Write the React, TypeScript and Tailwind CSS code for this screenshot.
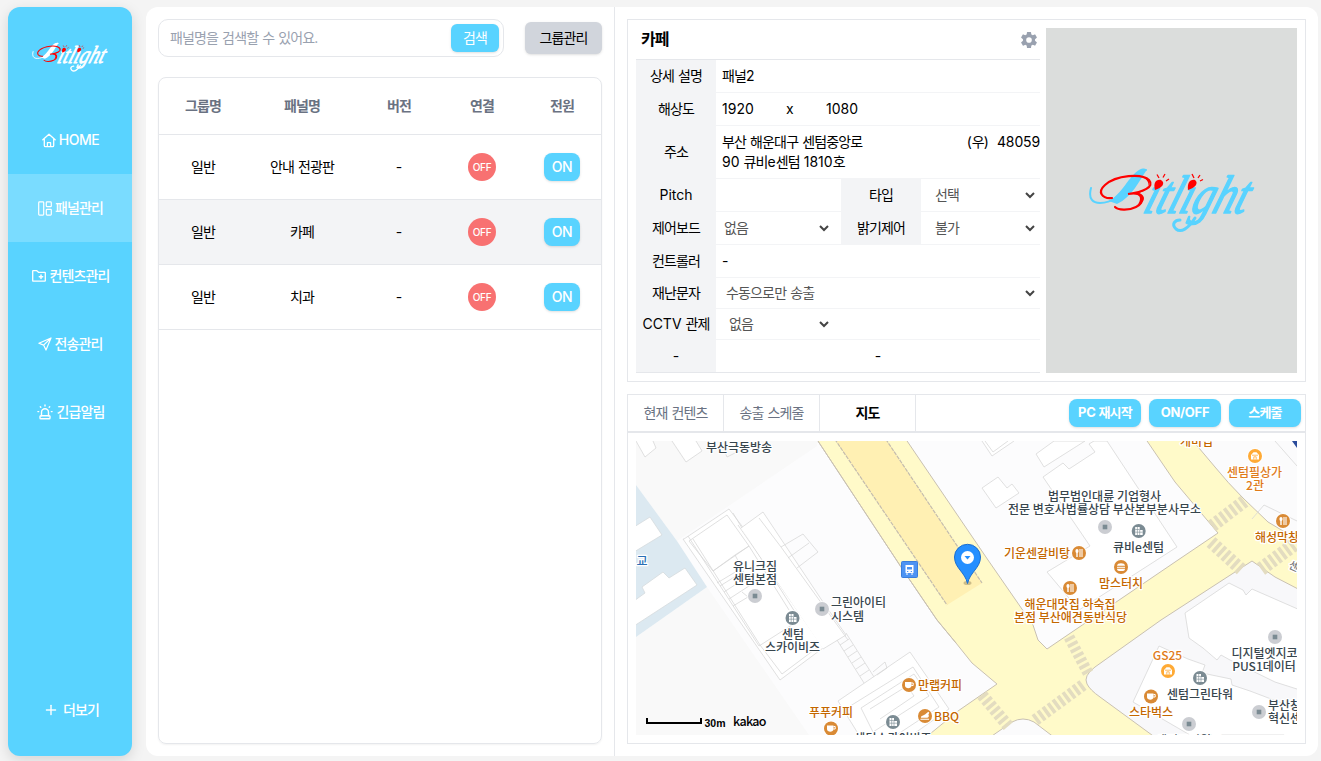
import React from "react";
import { AiOutlinePlus } from "react-icons/ai";
import { IoSettingsSharp } from "react-icons/io5";

/* Tightens Hangul runs while leaving Latin letters and digits untouched. */
function T({ children }: { children: string }) {
  const parts = children.split(/([\uac00-\ud7a3]+)/);
  return (
    <>
      {parts.map((p, i) =>
        i % 2 ? (
          <span key={i} className="tracking-[-0.06em]">
            {p}
          </span>
        ) : (
          p
        ),
      )}
    </>
  );
}

function Logo({ className, main }: { className: string; main: string }) {
  return (
    <svg viewBox="0 0 166 68" className={className} fill="none">
      <path d="M2 21C-1 32 4 36 11 36C24 36 34 27 42 15C47 7 52 2 57 3" stroke={main} strokeWidth="2" strokeLinecap="round" />
      <path d="M20 34C33 27 40 9 50 3C54 1 58 1 57 4C50 14 43 30 28 37Z" fill={main} />
      <path
        d="M23 31C13 32 8 25 16 18C27 8 53 6 60 13C66 20 54 25 39 27C57 24 56 36 47 40C39 44 29 43 26 40"
        stroke="#ff0000"
        strokeWidth="2.200"
        strokeLinecap="round"
      />
      <path d="M54 10C65 12 61 22 50 25L44 27C52 27 53 32 48 39C58 34 56 28 50 26C59 23 64 17 54 10Z" fill="#ff0000" />
      <g transform="translate(53 46) skewX(-19)">
        <text
          x="0"
          y="0"
          textLength="102"
          lengthAdjust="spacingAndGlyphs"
          fontSize="54"
          fontStyle="italic"
          fontFamily="Liberation Serif, serif"
          fill={main}
          stroke={main}
          strokeWidth="1.700"
          strokeLinejoin="round"
        >
          ıtlıght
        </text>
      </g>
      <path d="M106 51C99 62 92 66 87 62C82 57 86 53 91 53" stroke={main} strokeWidth="3" strokeLinecap="round" />
      <g fill="#ff0000">
        <path d="M66 23C64 16 67 12 72 13C77 16 73 21 66 23Z" />
        <path d="M99 23C98 16 101 12 106 13C110 16 106 21 99 23Z" />
      </g>
      <path
        d="M70 11L68 7.500M74 10.500L76 7M77 14L80 12M105 11L103 7M109 11L111 8M111 14L114 12.500"
        stroke="#ff0000"
        strokeWidth="1.300"
      />
    </svg>
  );
}

const iconProps = {
  fill: "none",
  stroke: "currentColor",
  strokeWidth: 1.3,
  strokeLinejoin: "round" as const,
  strokeLinecap: "round" as const,
};

const HomeIcon = () => (
  <svg width="14" height="15" viewBox="0 0 14 15" {...iconProps}>
    <path d="M0.800 6.800L7 1.200L13.200 6.800M2.300 6V12.500Q2.300 13.700 3.500 13.700H10.500Q11.700 13.700 11.700 12.500V6" />
    <path d="M5.400 13.500V9.700H8.600V13.500" strokeWidth="1.200" />
  </svg>
);

const PanelIcon = () => (
  <svg width="14" height="15" viewBox="0 0 14 15" {...iconProps} strokeWidth="1.200">
    <rect x="0.700" y="0.900" width="5" height="13.200" rx="0.800" />
    <rect x="8.300" y="0.900" width="5" height="4.800" rx="0.800" />
    <rect x="8.300" y="8.300" width="5" height="5.800" rx="0.800" />
  </svg>
);

const FolderIcon = () => (
  <svg width="14" height="12" viewBox="0 0 14 12" {...iconProps}>
    <path d="M0.700 10.700V1.200Q0.700 0.700 1.200 0.700H4.800L6.500 2.300H12.800Q13.300 2.300 13.300 2.800V10.700Q13.300 11.200 12.800 11.200H1.200Q0.700 11.200 0.700 10.700Z" />
    <path d="M7.300 6.700H10.700M9 5V8.400" strokeWidth="1.500" />
  </svg>
);

const PlaneIcon = () => (
  <svg width="14" height="14" viewBox="0 0 14 14" {...iconProps} strokeWidth="1.200">
    <path d="M13 1L0.900 6.200L5.600 8.100L8 13L13 1ZM13 1L5.600 8.100" />
  </svg>
);

const SirenIcon = () => (
  <svg width="16" height="16" viewBox="0 0 16 16" {...iconProps} strokeWidth="1.400">
    <path d="M4.500 11.700V8.300A3.500 3.500 0 0 1 11.500 8.300V11.700" />
    <rect x="3" y="11.700" width="10" height="3" rx="0.800" />
    <path d="M8 1V2M3.300 2.800L3.800 3.300M12.700 2.800L12.200 3.300M0.900 7.600H1.700M14.300 7.600H15.100" />
  </svg>
);

const nav = [
  { label: "HOME", icon: <HomeIcon />, gap: "gap-[3px] pl-px" },
  { label: "패널관리", icon: <PanelIcon />, gap: "gap-[3px] pl-px", active: true },
  { label: "컨텐츠관리", icon: <FolderIcon />, gap: "gap-[3px] pl-[2px]" },
  { label: "전송관리", icon: <PlaneIcon />, gap: "gap-[2px] pl-px" },
  { label: "긴급알림", icon: <SirenIcon />, gap: "gap-[3px] pl-[2px]" },
];

function Sidebar() {
  return (
    <aside className="flex h-[749px] w-[124px] shrink-0 flex-col rounded-[12px] bg-[#59d3ff] text-white shadow-[0_4px_14px_rgba(0,0,0,0.13)]">
      <div className="flex h-[99px] justify-center pt-[35px]">
        <Logo className="h-[31px] w-[76px]" main="#ffffff" />
      </div>
      {nav.map((n) => (
        <div
          key={n.label}
          className={"flex h-[68px] items-center justify-center font-medium " + n.gap + (n.active ? " bg-[#7adcff]" : "")}
        >
          {n.icon}
          <span className={n.label === "HOME" ? "tracking-[-0.03em]" : ""}>
            <T>{n.label}</T>
          </span>
        </div>
      ))}
      <div className="mt-auto mb-[36px] flex h-5 items-center justify-center gap-[5px] pl-[3px] font-medium">
        <AiOutlinePlus size={14} strokeWidth={30} />
        <span>
          <T>더보기</T>
        </span>
      </div>
    </aside>
  );
}

const cols = "grid grid-cols-[88px_110px_84px_82px_78px] items-center text-center";

function PanelList() {
  return (
    <section className="flex w-[469px] shrink-0 flex-col border-r border-gray-200 pt-3 pr-3 pb-3 pl-3">
      <div className="flex items-center">
        <div className="flex h-[38px] w-[346px] items-center justify-between rounded-[10px] border border-gray-200 pr-1 pl-[11px]">
          <span className="text-gray-400">
            <T>패널명을 검색할 수 있어요.</T>
          </span>
          <button className="h-7 w-12 rounded-md bg-[#59d3ff] text-white shadow-sm">
            <T>검색</T>
          </button>
        </div>
        <button className="ml-[21px] h-8 w-[77px] rounded-md bg-gray-300 shadow">
          <T>그룹관리</T>
        </button>
      </div>
      <div className="mt-5 h-[667px] w-[444px] overflow-hidden rounded-[8px] border border-gray-200 shadow-xs">
        <div className={cols + " h-[57px] border-b border-gray-200 font-semibold text-gray-500"}>
          {["그룹명", "패널명", "버전", "연결", "전원"].map((h) => (
            <span key={h}>
              <T>{h}</T>
            </span>
          ))}
        </div>
        {["안내 전광판", "카페", "치과"].map((name, i) => (
          <div key={name} className={cols + " h-[65px] border-b border-gray-200" + (i === 1 ? " bg-gray-100" : "")}>
            <span>
              <T>일반</T>
            </span>
            <span>
              <T>{name}</T>
            </span>
            <span>-</span>
            <span className="mx-auto flex size-7 items-center justify-center rounded-full bg-[#f87171] text-[10px] font-medium tracking-[-0.03em] text-white">
              OFF
            </span>
            <button className="mx-auto h-7 w-9 rounded-lg bg-[#59d3ff] font-medium tracking-[-0.03em] text-white shadow-sm">
              ON
            </button>
          </div>
        ))}
      </div>
    </section>
  );
}

function Label({ children, className = "" }: { children: string; className?: string }) {
  return (
    <div className={"flex w-20 shrink-0 items-center justify-center self-stretch bg-gray-100 pb-px " + className}>
      <span className="whitespace-nowrap">
        <T>{children}</T>
      </span>
    </div>
  );
}

function Select({ value, className }: { value: string; className: string }) {
  return (
    <div className={"flex items-center justify-between text-[#555] " + className}>
      <span>
        <T>{value}</T>
      </span>
      <svg width="10" height="7" viewBox="0 0 10 7" fill="none" stroke="#444" strokeWidth="2">
        <path d="M1 1L5 5L9 1" />
      </svg>
    </div>
  );
}

function Row({ label, h, children }: { label: string; h: string; children: React.ReactNode }) {
  return (
    <div className={"flex " + h}>
      <Label>{label}</Label>
      <div className="flex flex-1 items-center border-b border-gray-100">{children}</div>
    </div>
  );
}

function Detail() {
  return (
    <section className="flex h-[363px] w-[679px] border border-gray-200 pt-2 pl-2">
      <div className="flex w-[404px] flex-col">
        <div className="flex h-[31px] items-center justify-between pr-[2px] pl-[5px]">
          <h1 className="mt-[-10px] text-[16px] font-bold">
            <T>카페</T>
          </h1>
          <IoSettingsSharp size={18} className="mt-[-8px] text-gray-400" />
        </div>
        <div className="border-t border-b border-gray-200">
          <Row label="상세 설명" h="h-[33px]">
            <span className="pl-[6px]">
              <T>패널2</T>
            </span>
          </Row>
          <Row label="해상도" h="h-[33px]">
            <span className="w-[70px] pl-[6px]">1920</span>
            <span className="w-10">x</span>
            <span>1080</span>
          </Row>
          <Row label="주소" h="h-[53px]">
            <span className="w-[160px] pl-[6px]">
              <T>부산 해운대구 센텀중앙로</T>
              <br />
              <T>90 큐비e센텀 1810호</T>
            </span>
            <span className="mb-5 ml-auto flex gap-2">
              <span>
                <T>(우)</T>
              </span>
              <span className="tracking-[-0.01em]">48059</span>
            </span>
          </Row>
          <Row label="Pitch" h="h-[33px]">
            <div className="w-[125px]" />
            <Label className="-mb-px">타입</Label>
            <Select value="선택" className="flex-1 pr-[5px] pl-[14px]" />
          </Row>
          <Row label="제어보드" h="h-[33px]">
            <Select value="없음" className="w-[125px] pr-3 pl-2" />
            <Label className="-mb-px">밝기제어</Label>
            <Select value="불가" className="flex-1 pr-[5px] pl-[14px]" />
          </Row>
          <Row label="컨트롤러" h="h-[33px]">
            <span className="pl-[6px]">-</span>
          </Row>
          <Row label="재난문자" h="h-[31px]">
            <Select value="수동으로만 송출" className="flex-1 pr-[5px] pl-[10px]" />
          </Row>
          <Row label="CCTV 관제" h="h-[31px]">
            <Select value="없음" className="w-[125px] pr-3 pl-[13px]" />
          </Row>
          <div className="flex h-8">
            <Label>-</Label>
            <div className="flex flex-1 items-center justify-center">-</div>
          </div>
        </div>
      </div>
      <div className="ml-[6px] h-[345px] w-[251px] bg-[#dbdddc] pt-[139px] pl-[43px]">
        <Logo className="h-[68px] w-[166px]" main="#59d3ff" />
      </div>
    </section>
  );
}

type Kind = "gray" | "building" | "fork" | "cup" | "burger" | "shop" | "chicken";

function Poi({ x, y, kind }: { x: number; y: number; kind: Kind }) {
  const fill =
    kind === "gray" ? "#cbcdd2" : kind === "building" ? "#7b8b93" : kind === "shop" ? "#ffaa35" : "#d98a35";
  return (
    <g transform={`translate(${x} ${y})`}>
      <circle r="8" fill="#fff" opacity="0.8" />
      <circle r="7" fill={fill} />
      {kind === "gray" && <rect x="-2.3" y="-2.3" width="4.6" height="4.6" fill="#7b8b93" />}
      {kind === "building" && (
        <>
          <path d="M-3.5 4V-4H1V-1H4V4Z" fill="#fff" />
          <path d="M-1.3 -4V4M1 -1V4M-3.5 -1.5H1M-3.5 1.2H4" stroke="#7b8b93" strokeWidth="0.6" />
        </>
      )}
      {kind === "fork" && (
        <g stroke="#fff" fill="none">
          <path d="M-2 -1V4" strokeWidth="1.4" />
          <ellipse cx="-2" cy="-2" rx="1.6" ry="2" fill="#fff" stroke="none" />
          <path d="M1 -4V4M3 -4V4" strokeWidth="1.1" />
        </g>
      )}
      {kind === "cup" && (
        <g>
          <path d="M-4 -3H2.5V0.5C2.5 4-4 4-4 0.5Z" fill="#fff" />
          <path d="M2.5 -2H4.2V0.5H2.3" stroke="#fff" fill="none" />
        </g>
      )}
      {kind === "burger" && (
        <g>
          <path d="M-4 -1.3C-4 -4.6 4 -4.6 4 -1.3Z" fill="#fff" />
          <path d="M-4 0.3H4" stroke="#fff" />
          <path d="M-4 1.8H4C4 4 2.5 4 0 4S-4 4-4 1.8Z" fill="#fff" />
        </g>
      )}
      {kind === "shop" && (
        <g>
          <path d="M-4 3.5V-1L-1.5 -3.8H1.5L4 -1V3.5Z" fill="#fff" />
          <path d="M-1.2 3.5V0.8H1.2V3.5M-3 -0.8H3" stroke="#ffaa35" fill="none" strokeWidth="0.8" />
        </g>
      )}
      {kind === "chicken" && (
        <path
          d="M-4.5 2.7H4V3.8H-4.5ZM-4 1.8C-4.5 -0.5 -1 -0.5 0 -1.5L3.3 -4.3L4.3 -3.2L3.4 -1.5C4.5 0 3.5 1.8 2 1.8Z"
          fill="#fff"
        />
      )}
    </g>
  );
}

const ORANGE = "#c46700";
const LIGHT_ORANGE = "#e07b1a";
const SLATE = "#37454d";

const labels: [string, number, number, string][] = [
  ["부산극동방송", 739, 451.5, SLATE],
  ["유니크짐", 755, 571, SLATE],
  ["센텀본점", 755, 584, SLATE],
  ["그린아이티", 858.5, 606.5, SLATE],
  ["시스템", 847.5, 621, SLATE],
  ["센텀", 793, 638.5, SLATE],
  ["스카이비즈", 792.5, 651.5, SLATE],
  ["만랩커피", 940, 689.5, ORANGE],
  ["푸푸커피", 831, 716.5, ORANGE],
  ["BBQ", 946.5, 721, ORANGE],
  ["센텀스카이비즈", 893, 742.5, SLATE],
  ["법무법인대륜 기업형사", 1104.5, 501, SLATE],
  ["전문 변호사법률상담 부산본부분사무소", 1104.5, 514, SLATE],
  ["큐비e센텀", 1138.5, 552, SLATE],
  ["기운센갈비탕", 1037, 557.5, ORANGE],
  ["맘스터치", 1121, 587.5, ORANGE],
  ["해운대맛집 하숙집", 1070, 608.5, ORANGE],
  ["본점 부산애견동반식당", 1070.5, 621.5, ORANGE],
  ["개미집", 1196.5, 445.5, ORANGE],
  ["센텀필상가", 1254.5, 476.5, LIGHT_ORANGE],
  ["2관", 1255, 490, LIGHT_ORANGE],
  ["해성막창", 1277, 541.5, ORANGE],
  ["GS25", 1167.5, 660, LIGHT_ORANGE],
  ["스타벅스", 1151, 716.5, ORANGE],
  ["센텀그린타워", 1200, 698.5, SLATE],
  ["디지털엣지코", 1264.5, 657.5, SLATE],
  ["PUS1데이터", 1264, 670.5, SLATE],
  ["부산창조", 1290, 709.5, SLATE],
  ["혁신센터", 1290, 722.5, SLATE],
  ["센텀드림월드", 1189, 744.5, SLATE],
];

const pois: [number, number, Kind][] = [
  [755, 596, "gray"],
  [822, 609, "gray"],
  [1105, 527, "gray"],
  [1275, 637, "gray"],
  [1259, 712, "gray"],
  [1189, 724, "gray"],
  [792.5, 618, "building"],
  [893, 722, "building"],
  [1138.7, 531, "building"],
  [1200, 678, "building"],
  [909, 685, "cup"],
  [831, 728.5, "cup"],
  [1151, 696.5, "cup"],
  [925, 716, "chicken"],
  [1079, 553, "fork"],
  [1070, 588, "fork"],
  [1283, 521, "fork"],
  [1121, 567, "burger"],
  [1255, 456, "shop"],
  [1168, 671, "shop"],
];

function KakaoMap() {
  return (
    <svg viewBox="636 441 661 294" width="661" height="294" className="block">
      <rect x="636" y="441" width="661" height="294" fill="#fffac9" />
      <g stroke="#c9c1b2" strokeWidth="1">
        <path d="M630 435H814L903 570L937 620L956 643L972 663L997 684L958 711L925 738H630Z" fill="#fcfcfd" />
        <path d="M903 435L988 560L1033 625L1038 640L1047 649L1178 560L1218 533L1175 482L1143 435Z" fill="#fcfcfd" />
        <path d="M1188 435L1215 467Q1228 483 1243 498L1268 522L1300 541V435Z" fill="#fbfbfc" />
        <path
          d="M1252 561L1161 620L1095 667Q1083 676 1087 684Q1090 690 1100 697L1156 738H1300V590L1275 577Z"
          fill="#f8f8fa"
        />
        <path d="M989 738L1012 722Q1023 716 1034 722L1055 738Z" fill="#fbfbfc" />
      </g>
      <path d="M636 441H818L817 446L677 541L636 485Z" fill="#f9f9f9" />
      <path d="M707 587L636 637V735H809Z" fill="#f9f9f9" />
      <path d="M636 485L677 541L707 587L636 637Z" fill="#dce9f1" />
      <g fill="#fff" stroke="#d5dbdd" strokeWidth="0.8">
        <path d="M634 527L650 517L662 535L634 552Z" />
        <path d="M634 626L697 585L685 568L669 578L663 572L642 587L645 593L634 601Z" />
      </g>
      <g fill="#fff" stroke="#d8d8d8" strokeWidth="0.8">
        <path d="M636 441L645 457L656 448L653 441" />
        <path d="M672 441L686 462L702 451L696 441" />
        <path d="M720 441L727 457L745 448" fill="none" />
        <path d="M684 539L729 509L764 555L823 648L780 680L683 539Z" />
        <path d="M689 541L727 515L749 546L713 571Z" />
        <path
          d="M693 539L760 645L782 674L818 647M733 513L745 533L800 620M688 536L759 646L795 623M738 525L822 646"
          fill="none"
        />
        <path d="M741 528L763 512L823 602L846 635L823 649" />
        <path d="M759 518L781 547L799 572L848 640M781 547L803 534L818 552L797 568M788 558L809 543" fill="none" />
        <path
          d="M713 571L735 555L742 568L717 583M735 555L749 546L789 610M720 586L744 571M724 592L747 577M729 599L752 584M733 606L748 597L742 592"
          fill="none"
        />
        <path
          d="M837 640L864 683M846 633L874 677M840 645L849 639M844 651L853 645M848 657L857 651M852 663L861 657M856 669L865 663M860 676L869 670"
          fill="none"
        />
        <path d="M838 701L910 652L949 709L905 740H862Z" />
        <path
          d="M847 708L913 667L939 707L895 736M861 708L914 674L929 696L873 732ZM870 709L907 686L914 696L880 719M873 672L885 662L887 668L877 675"
          fill="none"
        />
        <path d="M982 441L992 456L1014 441M985 441L993 452L1008 441" />
        <path d="M1036 454L1054 441H1085L1044 467Z" />
        <path d="M1043 477L1063 463L1069 469L1095 452L1089 444L1094 441H1107L1177 547L1079 610L1047 572L1090 546Z" />
        <path d="M982 488L998 477L1007 488L1012 484L1019 493L996 508Z" />
        <path d="M1252 519L1264 505L1297 521M1275 441L1297 466" fill="none" />
        <path d="M1185 613L1229 583L1243 590L1246 595L1252 589L1300 610V690L1275 682L1230 660L1221 655L1217 660L1203 648L1189 638Z" />
        <path d="M1159 646L1188 659L1205 665L1202 673L1231 679L1232 685L1250 691L1300 710V740H1290L1284 735H1190L1133 702Z" />
      </g>
      <path d="M832 435L947 605L982 583L883 435Z" fill="#fff0b3" />
      <path d="M832 435L947 605M883 435L982 583" stroke="#c4bcae" strokeWidth="1.200" strokeDasharray="4 1" fill="none" />
      <path d="M814 435L903 570L937 620L956 643" stroke="#c9c1b2" fill="none" />
      <g stroke="#e3dcc0" fill="none">
        <path d="M1069 637L1089 675" strokeWidth="11" strokeDasharray="3.600 2.600" />
        <path d="M1083 685L1034 721" strokeWidth="12" strokeDasharray="3.600 2.600" />
        <path d="M982 695L1009 727" strokeWidth="12" strokeDasharray="3.600 2.600" />
        <path d="M1212 526L1246 500" strokeWidth="13" strokeDasharray="3.600 2.600" />
        <path d="M1211 542L1243 571" strokeWidth="13" strokeDasharray="3.600 2.600" />
        <path d="M1261 569L1295 544" strokeWidth="14" strokeDasharray="3.600 2.600" />
      </g>
      <path d="M1292 441H1297V448Z" fill="#2b4c9b" />

      <g
        fontFamily="Noto Sans CJK KR, sans-serif"
        fontSize="12"
        fontWeight="500"
        textAnchor="middle"
        stroke="#fff"
        strokeWidth="2.500"
        strokeLinejoin="round"
      >
        {labels.map(([t, x, y, c]) => (
          <text key={t} x={x} y={y} fill={c} className="[paint-order:stroke]">
            {t}
          </text>
        ))}
        <text x="642" y="566" fill="#2a6fb5" className="[paint-order:stroke]">
          교
        </text>
        <text transform="translate(1294 566) rotate(25)" x="0" y="4" fill="#777" fontSize="11" className="[paint-order:stroke]">
          센
        </text>
      </g>
      {pois.map(([x, y, k]) => (
        <Poi key={x + "-" + y} x={x} y={y} kind={k} />
      ))}

      <g>
        <rect x="901.500" y="561.500" width="16" height="16" rx="1" fill="#4d94f3" stroke="#3a7edc" />
        <path d="M905.500 565H913.500V573H905.500Z" fill="#fff" />
        <path d="M907 567H912V569.500H907ZM907 571H908.300V572H907ZM910.700 571H912V572H910.700Z" fill="#4d94f3" />
        <path d="M906 574H908M911 574H913" stroke="#fff" />
      </g>
      <ellipse cx="967.500" cy="583" rx="4" ry="2" fill="#998a60" opacity="0.5" />
      <path
        d="M967.500 583.500C965 572 954.500 568 954.500 557A13 12.700 0 0 1 980.500 557C980.500 568 970 572 967.500 583.500Z"
        fill="#258fff"
        stroke="#1b6fd0"
      />
      <circle cx="967.500" cy="557.500" r="6.500" fill="#fff" />
      <path d="M964.500 556H970.500L967.500 559.500Z" fill="#258fff" />

      <path d="M647 718V723H701V718" fill="none" stroke="#000" strokeWidth="2" />
      <text
        x="704.500"
        y="727"
        fontFamily="Liberation Sans, sans-serif"
        fontSize="10"
        fontWeight="700"
        textLength="21"
        lengthAdjust="spacingAndGlyphs"
      >
        30m
      </text>
      <text x="733" y="726" fontFamily="Noto Sans CJK KR, sans-serif" fontSize="12.500" fontWeight="500" textLength="33.500">
        kakao
      </text>
    </svg>
  );
}

function MapPanel() {
  return (
    <section className="mt-3 h-[350px] w-[679px] border border-gray-200">
      <div className="flex h-[38px] items-center border-b-2 border-gray-200">
        {["현재 컨텐츠", "송출 스케줄", "지도"].map((t, i) => (
          <div
            key={t}
            className={
              "flex w-24 items-center justify-center self-stretch border-r border-gray-200 " +
              (i === 2 ? "font-bold text-black" : "text-gray-500")
            }
          >
            <span>
              <T>{t}</T>
            </span>
          </div>
        ))}
        <div className="mr-1 mb-px ml-auto flex gap-2">
          {["PC 재시작", "ON/OFF", "스케줄"].map((t) => (
            <button
              key={t}
              className="h-7 w-[72px] rounded-lg bg-[#59d3ff] pb-px text-[13px] font-bold tracking-[-0.02em] whitespace-nowrap text-white shadow"
            >
              <T>{t}</T>
            </button>
          ))}
        </div>
      </div>
      <div className="px-2 pt-2">
        <KakaoMap />
      </div>
    </section>
  );
}

export default function App() {
  return (
    <div className="flex h-[761px] w-[1321px] gap-[14px] overflow-hidden bg-[#f4f4f4] pt-[7px] pl-2 font-['Inter','Noto_Sans_CJK_KR',sans-serif] text-[14px] leading-5 text-black">
      <Sidebar />
      <main className="flex h-[749px] w-[1172px] rounded-[12px] bg-white">
        <PanelList />
        <div className="flex flex-col pt-3 pl-3">
          <Detail />
          <MapPanel />
        </div>
      </main>
    </div>
  );
}
